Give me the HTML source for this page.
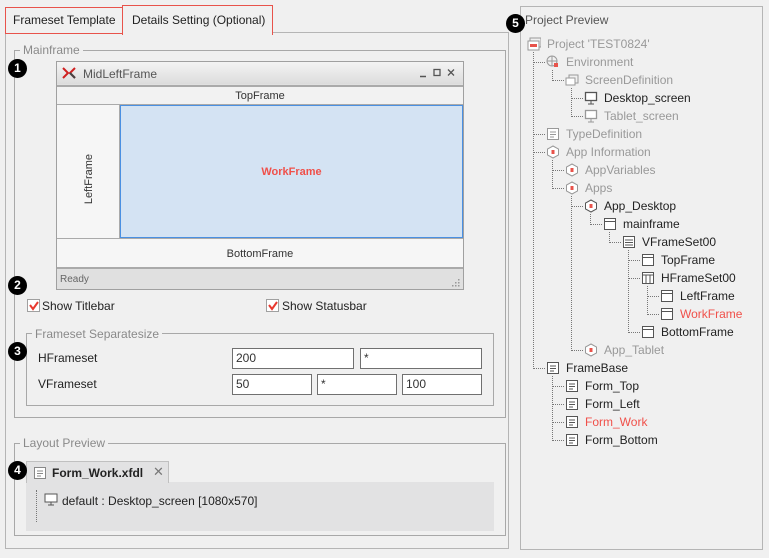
<!DOCTYPE html>
<html><head><meta charset="utf-8"><style>
*{box-sizing:border-box;margin:0;padding:0}
body{width:769px;height:558px;background:#f0f0f0;font-family:"Liberation Sans",sans-serif;font-size:12px;color:#222;position:relative;overflow:hidden}
.a{position:absolute}
.t{position:absolute;white-space:nowrap;line-height:14px}
.fs{position:absolute;border:1px solid #a8a8a8}
.lg{position:absolute;background:#f0f0f0;color:#8a8a8a;padding:0 3px;line-height:14px}
.badge{position:absolute;width:19px;height:19px;border-radius:50%;background:#000;color:#fff;font-weight:bold;font-size:12px;text-align:center;line-height:19px}
.inp{position:absolute;background:#fff;border:1px solid #707070;height:21px;padding-left:3px;line-height:19px;font-size:12px;color:#333}
.cb{position:absolute;width:13px;height:13px;border:1px solid #a0a0a0;background:#fff}
.vl{position:absolute;border-left:1px dotted #777;width:0}
.hl{position:absolute;border-top:1px dotted #777;height:0}
.ic{position:absolute;width:13px;height:12px;border:1px solid #666;background:#fff}
.g{color:#999}.r{color:#f0504a}
</style></head><body>
<div class="a" style="left:5px;top:32px;width:504px;height:517px;border:1px solid #b5b5b5;background:#f0f0f0"></div>
<div class="a" style="left:5px;top:7px;width:118px;height:27px;border:1px solid #e8534b;background:#f0f0f0"></div>
<div class="t" style="left:13px;top:13px;font-size:12px">Frameset Template</div>
<div class="a" style="left:122px;top:5px;width:151px;height:30px;border:1px solid #e8534b;border-bottom:none;background:#f0f0f0"></div>
<div class="t" style="left:132px;top:13px;font-size:12px">Details Setting (Optional)</div>

<div class="fs" style="left:14px;top:50px;width:492px;height:368px"></div>
<div class="lg" style="left:20px;top:43px">Mainframe</div>
<div class="badge" style="left:8px;top:59px">1</div>

<div class="a" style="left:56px;top:61px;width:408px;height:229px;border:1px solid #a0a0a0;background:#e0e0e0"></div>
<div class="a" style="left:57px;top:62px;width:406px;height:22px;background:linear-gradient(#f4f4f4,#dcdcdc)"></div>
<svg class="a" style="left:62px;top:67px" width="14" height="12"><path d="M1 1 L6 6 L1 11 M13 1 L8 6 L13 11" stroke="#d02020" stroke-width="2" fill="none"/><path d="M8 6 L13 11" stroke="#444" stroke-width="2"/></svg>
<div class="t" style="left:83px;top:67px;color:#555">MidLeftFrame</div>
<svg class="a" style="left:419px;top:68px" width="38" height="10"><path d="M1 8.5 H7" stroke="#555" stroke-width="1.5"/><rect x="15" y="1.5" width="6" height="6" fill="none" stroke="#555" stroke-width="1.3"/><path d="M29 1.5 L35 7.5 M35 1.5 L29 7.5" stroke="#555" stroke-width="1.3"/></svg>
<div class="a" style="left:57px;top:85px;width:406px;height:20px;background:#f2f2f2;border-top:2px solid #aaa;border-bottom:1px solid #aaa"></div>
<div class="t" style="left:57px;top:89px;width:406px;text-align:center;font-size:11px;color:#333">TopFrame</div>
<div class="a" style="left:57px;top:105px;width:63px;height:133px;background:#f6f6f6;border-right:1px solid #aaa"></div>
<div class="t" style="left:52px;top:172px;width:74px;text-align:center;font-size:11px;color:#333;transform:rotate(-90deg)">LeftFrame</div>
<div class="a" style="left:120px;top:105px;width:343px;height:133px;background:#d4e3f3;border:1px solid #4a90e2"></div>
<div class="t" style="left:120px;top:165px;width:343px;text-align:center;font-size:11px;font-weight:bold;color:#f0504a">WorkFrame</div>
<div class="a" style="left:57px;top:238px;width:406px;height:31px;background:#f6f6f6;border-top:1px solid #aaa;border-bottom:2px solid #aaa"></div>
<div class="t" style="left:57px;top:247px;width:406px;text-align:center;font-size:11px;color:#333">BottomFrame</div>
<div class="t" style="left:60px;top:273px;font-size:10px;color:#666">Ready</div>
<svg class="a" style="left:451px;top:278px" width="10" height="9"><g fill="#999"><rect x="7" y="1" width="1.5" height="1.5"/><rect x="4" y="4" width="1.5" height="1.5"/><rect x="7" y="4" width="1.5" height="1.5"/><rect x="1" y="7" width="1.5" height="1.5"/><rect x="4" y="7" width="1.5" height="1.5"/><rect x="7" y="7" width="1.5" height="1.5"/></g></svg>

<div class="badge" style="left:8px;top:276px">2</div>
<div class="cb" style="left:27px;top:299px"></div>
<svg class="a" style="left:28px;top:300px" width="12" height="12"><path d="M2 5 L5 9 L10 2" stroke="#e8392f" stroke-width="2" fill="none"/></svg>
<div class="t" style="left:42px;top:299px">Show Titlebar</div>
<div class="cb" style="left:266px;top:299px"></div>
<svg class="a" style="left:267px;top:300px" width="12" height="12"><path d="M2 5 L5 9 L10 2" stroke="#e8392f" stroke-width="2" fill="none"/></svg>
<div class="t" style="left:282px;top:299px">Show Statusbar</div>

<div class="fs" style="left:26px;top:333px;width:468px;height:73px"></div>
<div class="lg" style="left:32px;top:327px">Frameset Separatesize</div>
<div class="badge" style="left:8px;top:342px">3</div>
<div class="t" style="left:38px;top:351px">HFrameset</div>
<div class="t" style="left:38px;top:377px">VFrameset</div>
<div class="inp" style="left:232px;top:348px;width:122px">200</div>
<div class="inp" style="left:360px;top:348px;width:122px">*</div>
<div class="inp" style="left:232px;top:374px;width:80px">50</div>
<div class="inp" style="left:317px;top:374px;width:80px">*</div>
<div class="inp" style="left:402px;top:374px;width:80px">100</div>

<div class="fs" style="left:14px;top:443px;width:492px;height:93px"></div>
<div class="lg" style="left:20px;top:436px">Layout Preview</div>
<div class="a" style="left:26px;top:482px;width:468px;height:49px;background:#e2e2e3"></div>
<div class="a" style="left:26px;top:461px;width:143px;height:22px;background:#e2e2e3;border:1px solid #c0c0c0;border-bottom:none"></div>
<div class="badge" style="left:8px;top:461px">4</div>
<svg class="a" style="left:34px;top:467px" width="13" height="13"><rect x="0.5" y="0.5" width="11" height="11" fill="#fff" stroke="#888"/><path d="M3 4H9M3 6.5H9M3 9H7" stroke="#888"/></svg>
<div class="t" style="left:52px;top:466px;font-weight:bold">Form_Work.xfdl</div>
<div class="t" style="left:153px;top:465px;color:#777;font-size:13px">✕</div>
<div class="vl" style="left:36px;top:490px;height:32px"></div>
<svg class="a" style="left:44px;top:493px" width="14" height="13"><rect x="1" y="1" width="12" height="8" fill="#fff" stroke="#555"/><path d="M7 9 V12 M4 12 H10" stroke="#555"/></svg>
<div class="t" style="left:62px;top:494px">default : Desktop_screen [1080x570]</div>

<div class="a" style="left:520px;top:6px;width:243px;height:544px;border:1px solid #b5b5b5"></div>
<div class="t" style="left:525px;top:13px;color:#555">Project Preview</div>
<div class="badge" style="left:506px;top:14px">5</div>

<div class="vl" style="left:533px;top:52px;height:317px"></div>
<div class="vl" style="left:552px;top:70px;height:11px"></div>
<div class="vl" style="left:571px;top:88px;height:29px"></div>
<div class="vl" style="left:552px;top:160px;height:29px"></div>
<div class="vl" style="left:571px;top:196px;height:155px"></div>
<div class="vl" style="left:590px;top:214px;height:11px"></div>
<div class="vl" style="left:609px;top:232px;height:11px"></div>
<div class="vl" style="left:628px;top:250px;height:83px"></div>
<div class="vl" style="left:647px;top:286px;height:29px"></div>
<div class="vl" style="left:552px;top:376px;height:65px"></div>

<div id="tree"></div>
<script>
var items=[
[0,"Project 'TEST0824'","g","p"],[1,"Environment","g","e"],[2,"ScreenDefinition","g","s"],[3,"Desktop_screen","","m"],[3,"Tablet_screen","g","m"],
[1,"TypeDefinition","g","f"],[1,"App Information","g","h"],[2,"AppVariables","g","h"],[2,"Apps","g","h"],[3,"App_Desktop","","h"],
[4,"mainframe","","w"],[5,"VFrameSet00","","v"],[6,"TopFrame","","w"],[6,"HFrameSet00","","c"],[7,"LeftFrame","","w"],[7,"WorkFrame","r","w"],
[6,"BottomFrame","","w"],[3,"App_Tablet","g","h"],[1,"FrameBase","","f"],[2,"Form_Top","","f"],[2,"Form_Left","","f"],[2,"Form_Work","r","f"],[2,"Form_Bottom","","f"]];
var h="";
items.forEach(function(it,i){
 var y=44+i*18, tx=547+it[0]*19, ix=tx-20;
 if(it[0]>0){h+='<div class="hl" style="left:'+(ix-13)+'px;top:'+y+'px;width:12px"></div>';}
 var c=it[2]=="g"?"#999":"#555", s="";
 switch(it[3]){
  case "p": s='<rect x="3" y="1" width="11" height="9" fill="none" stroke="'+c+'"/><rect x="1" y="4" width="11" height="9" fill="#fff" stroke="'+c+'"/><rect x="3" y="7" width="7" height="3" fill="#e8534b"/>';break;
  case "e": s='<circle cx="6" cy="6" r="5" fill="none" stroke="'+c+'"/><path d="M1 6H11M6 1V11" stroke="'+c+'"/><rect x="8" y="8" width="4" height="4" fill="#e8534b"/>';break;
  case "s": s='<rect x="4" y="2" width="9" height="8" fill="none" stroke="'+c+'"/><rect x="1" y="5" width="9" height="7" fill="#fff" stroke="'+c+'"/>';break;
  case "m": s='<rect x="1.5" y="1.5" width="11" height="8" fill="#fff" stroke="'+c+'" stroke-width="1.3"/><path d="M7 10V13M4 13H10" stroke="'+c+'"/>';break;
  case "h": s='<path d="M7 1L12.5 4V10L7 13L1.5 10V4Z" fill="#fff" stroke="'+c+'"/><rect x="5.5" y="5" width="3" height="4" fill="#e8534b"/>';break;
  case "f": s='<rect x="1.5" y="1.5" width="11" height="11" fill="#fff" stroke="'+c+'"/><path d="M4 5H10M4 7.5H10M4 10H8" stroke="'+c+'"/>';break;
  case "v": s='<rect x="1.5" y="1.5" width="11" height="11" fill="#fff" stroke="'+c+'"/><path d="M3 5H11M3 7.5H11M3 10H11" stroke="'+c+'"/>';break;
  case "c": s='<rect x="1.5" y="1.5" width="11" height="11" fill="#fff" stroke="'+c+'"/><path d="M1.5 4H12.5M5 4V12.5M9 4V12.5" stroke="'+c+'"/>';break;
  default: s='<rect x="1.5" y="1.5" width="11" height="11" fill="#fff" stroke="'+c+'"/><path d="M1.5 4.5H12.5" stroke="'+c+'"/>';
 }
 h+='<svg class="a" style="left:'+ix+'px;top:'+(y-7)+'px" width="14" height="14">'+s+'</svg>';
 h+='<div class="t '+it[2]+'" style="left:'+tx+'px;top:'+(y-7)+'px">'+it[1]+'</div>';
});
document.getElementById("tree").innerHTML=h;
</script>
</body></html>
